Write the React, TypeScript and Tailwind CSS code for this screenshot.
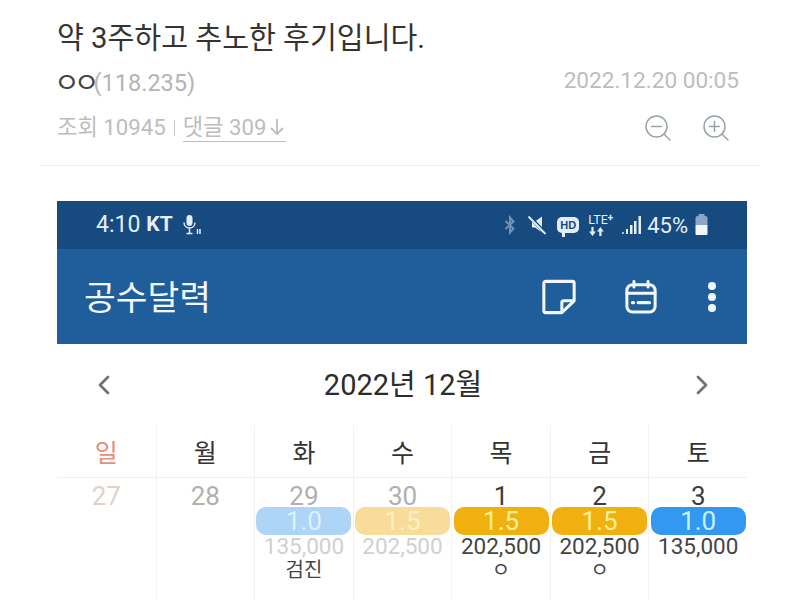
const cjk = "font-['Roboto','Noto_Sans_CJK_KR',sans-serif]";

const weekdays = ["일", "월", "화", "수", "목", "금", "토"];

const days = [
  { date: "27", dateColor: "text-[#e3d0cb]" },
  { date: "28", dateColor: "text-[#b0b0b0]" },
  {
    date: "29",
    dateColor: "text-[#b0b0b0]",
    badge: "1.0",
    badgeColor: "bg-[#aed4f8] text-[#d8f2ff]",
    amount: "135,000",
    amountColor: "text-[#cfcfcf]",
    note: "검진",
  },
  {
    date: "30",
    dateColor: "text-[#b0b0b0]",
    badge: "1.5",
    badgeColor: "bg-[#f8dd9a] text-[#fcefc0]",
    amount: "202,500",
    amountColor: "text-[#d0d0d0]",
  },
  {
    date: "1",
    dateColor: "text-[#3c3c3c]",
    badge: "1.5",
    badgeColor: "bg-[#f0b00f] text-[#fdf09a]",
    amount: "202,500",
    amountColor: "text-[#444444]",
    note: "ㅇ",
  },
  {
    date: "2",
    dateColor: "text-[#3c3c3c]",
    badge: "1.5",
    badgeColor: "bg-[#f0b00f] text-[#fdf09a]",
    amount: "202,500",
    amountColor: "text-[#444444]",
    note: "ㅇ",
  },
  {
    date: "3",
    dateColor: "text-[#3c3c3c]",
    badge: "1.0",
    badgeColor: "bg-[#3398f0] text-[#c6f2ff]",
    amount: "135,000",
    amountColor: "text-[#444444]",
  },
];

function ZoomIcon({ plus }: { plus?: boolean }) {
  return (
    <svg width="28" height="28" viewBox="0 0 28 28" fill="none" stroke="#9aa3a8" strokeWidth="1.5" strokeLinecap="round">
      <circle cx="12.5" cy="12.5" r="10.5" />
      <path d="M20 20l6 6" />
      <path d="M7.5 12.5h10" />
      {plus && <path d="M12.5 7.5v10" />}
    </svg>
  );
}

function MicIcon() {
  return (
    <svg width="20" height="22" viewBox="0 0 20 22" fill="none" stroke="#e4eef6">
      <rect x="4.5" y="1" width="6" height="11" rx="3" fill="#e4eef6" stroke="none" />
      <path d="M2 8.5c0 3.5 2.500 5.500 5.500 5.500s5.500-2 5.500-5.500M7.500 14v5M4.500 19.500h6" strokeWidth="1.4" />
      <path d="M15.500 15v5M18 15v5" strokeWidth="1.500" />
    </svg>
  );
}

function BluetoothIcon() {
  return (
    <svg width="12" height="20" viewBox="0 0 12 18" fill="none" stroke="#6f93b6" strokeWidth="2">
      <path d="M1.500 5l8 7.500-3.500 4V1.500l3.500 4-8 7.500" />
    </svg>
  );
}

function MuteIcon() {
  return (
    <svg width="20" height="20" viewBox="0 0 20 20" fill="none">
      <path d="M5 6.500h3L15 1.500v16L8 12.500H5z" fill="#e4eef6" />
      <path d="M1.500 0.500l17 18" stroke="#174a7f" strokeWidth="3.500" />
      <path d="M1.500 1.500l17 17.500" stroke="#e4eef6" strokeWidth="1.800" />
    </svg>
  );
}

function HdIcon() {
  return (
    <div className="relative flex h-[16px] w-[22px] items-center justify-center rounded-[5px] bg-[#e4eef6]">
      <span className="font-['Liberation_Sans',sans-serif] text-[11px] leading-none font-bold text-[#174a7f]">HD</span>
      <span className="absolute bottom-[-4px] left-[5px] h-[5px] w-[3px] bg-[#e4eef6]" />
    </div>
  );
}

function LteIcon() {
  return (
    <div className="relative flex h-[24px] w-[26px] flex-col items-start">
      <span className="font-['Roboto',sans-serif] text-[12.500px] leading-[13px] text-[#e4eef6]">
        LTE<span className="relative -top-[3px] text-[10px] font-bold">+</span>
      </span>
      <svg width="16" height="9" viewBox="0 0 14 8" className="ml-[1px]" fill="#e4eef6">
        <path d="M3 8L0 4h2V0h2v4h2zM10 0l3 4h-2v4H9V4H7z" />
      </svg>
    </div>
  );
}

function SignalIcon() {
  return (
    <svg width="21" height="20" viewBox="0 0 21 20" fill="#e4eef6">
      <rect x="0" y="17" width="2" height="2" opacity="0.7" />
      <rect x="4" y="14" width="2" height="5" />
      <rect x="8" y="10" width="2.500" height="9" />
      <rect x="12" y="6" width="2.500" height="13" />
      <rect x="16.500" y="1" width="2.500" height="18" />
    </svg>
  );
}

function BatteryIcon() {
  return (
    <svg width="15" height="22" viewBox="0 0 14 22">
      <rect x="4" y="0" width="6" height="2" fill="#8aa8c6" />
      <path d="M1 4a2 2 0 012-2h8a2 2 0 012 2v7H1z" fill="#8aa8c6" />
      <path d="M1 11h12v9a1 1 0 01-1 1H2a1 1 0 01-1-1z" fill="#f2f6f9" />
    </svg>
  );
}

function NoteIcon() {
  return (
    <svg width="36" height="36" viewBox="0 0 38 38" fill="none" stroke="#f2f7fb" strokeWidth="3.200" strokeLinejoin="round">
      <path d="M5 2.500h28a2 2 0 012 2V23L22 35.500H5a2 2 0 01-2-2v-29a2 2 0 012-2z" />
      <path d="M35 23H24a2 2 0 00-2 2v10.500" />
    </svg>
  );
}

function CalendarIcon() {
  return (
    <svg width="32" height="34" viewBox="0 0 34 36" fill="none" stroke="#f2f7fb" strokeWidth="3.200" strokeLinecap="round">
      <rect x="2" y="5" width="30" height="29" rx="6" />
      <path d="M9.500 1.500v6M24.500 1.500v6M2 14h30" />
      <path d="M8 24h1M14 24h12" strokeWidth="3.500" />
    </svg>
  );
}

function Chevron({ right }: { right?: boolean }) {
  return (
    <svg width="14" height="20" viewBox="0 0 14 20" fill="none" stroke="#6f7478" strokeWidth="2.800" strokeLinecap="round" strokeLinejoin="round">
      <path d={right ? "M3 2l8 8-8 8" : "M11 2l-8 8 8 8"} />
    </svg>
  );
}

export default function App() {
  return (
    <div className={`h-[600px] w-[800px] overflow-hidden bg-white ${cjk}`}>
      <div className="mx-[40px] flex h-[166px] flex-col border-b border-[#efefef] pr-[21px] pl-[17px]">
        <h1 className="mt-[16px] h-[44px] text-[29.200px] leading-[44px] font-normal text-[#333333]">
          약 3주하고 추노한 후기입니다.
        </h1>
        <div className="mt-[7px] flex h-[34px] items-center justify-between">
          <div className="flex items-center text-[23.500px] text-[#b5b5b5]">
            <span className="-ml-[3px] text-[28px] leading-none tracking-[-6px] text-[#444444]">ㅇㅇ</span>
            <span>(118.235)</span>
          </div>
          <span className="pb-[6px] text-[22.600px] text-[#bdbdbd]">2022.12.20 00:05</span>
        </div>
        <div className="mt-[10px] flex h-[34px] items-center justify-between">
          <div className="flex items-center text-[22.200px] text-[#bdbdbd]">
            <span>조회 10945</span>
            <span className="mx-[8px] h-[16px] w-px bg-[#cccccc]" />
            <span className="flex h-[29px] items-center border-b border-[#bdbdbd]">
              댓글 309
              <svg width="18" height="20" viewBox="0 0 18 20" fill="none" stroke="#bdbdbd" strokeWidth="1.800" className="ml-[2px]">
                <path d="M9 2v15M3 11l6 6 6-6" />
              </svg>
            </span>
          </div>
          <div className="flex items-center gap-[30px] pr-[9px]">
            <ZoomIcon />
            <ZoomIcon plus />
          </div>
        </div>
      </div>

      <div className="mt-[35px] ml-[57px] w-[690px]">
        <div className="flex h-[48px] items-center justify-between bg-[#174a7f] pr-[38px] pl-[39px] text-[#e4eef6]">
          <div className="flex items-center">
            <span className="text-[23px]">4:10</span>
            <span className="ml-[6px] text-[21px] font-bold">KT</span>
            <span className="ml-[9px]">
              <MicIcon />
            </span>
          </div>
          <div className="flex items-center">
            <BluetoothIcon />
            <span className="ml-[11px]">
              <MuteIcon />
            </span>
            <span className="ml-[10px]">
              <HdIcon />
            </span>
            <span className="ml-[9px]">
              <LteIcon />
            </span>
            <span className="ml-[8px]">
              <SignalIcon />
            </span>
            <span className="ml-[4px] text-[22px]">45%</span>
            <span className="ml-[6px]">
              <BatteryIcon />
            </span>
          </div>
        </div>

        <div className="flex h-[95px] items-center justify-between bg-[#1f5d9b] pr-[31px] pl-[27px]">
          <span className="pt-[5px] text-[34.500px] text-[#f2f7fb]">공수달력</span>
          <div className="flex items-center">
            <NoteIcon />
            <span className="ml-[48px]">
              <CalendarIcon />
            </span>
            <div className="ml-[51px] flex flex-col gap-[3px]">
              <span className="h-[8px] w-[8px] rounded-full bg-[#f2f7fb]" />
              <span className="h-[8px] w-[8px] rounded-full bg-[#f2f7fb]" />
              <span className="h-[8px] w-[8px] rounded-full bg-[#f2f7fb]" />
            </div>
          </div>
        </div>

        <div className="flex h-[81px] items-center justify-between pr-[38px] pl-[40px]">
          <Chevron />
          <span className="pt-[2px] text-[29px] text-[#2c2c2c]">2022년 12월</span>
          <Chevron right />
        </div>

        <div className="grid grid-cols-7 border-b border-[#f0f0f0]">
          {weekdays.map((day, i) => (
            <div
              key={day}
              className={`flex h-[52px] items-center justify-center pt-[5px] text-[25px] ${i > 0 ? "border-l border-[#f2f2f2]" : ""} ${i === 0 ? "text-[#e58f7c]" : "text-[#333333]"}`}
            >
              {day}
            </div>
          ))}
        </div>

        <div className="grid grid-cols-7">
          {days.map((day, i) => (
            <div
              key={day.date}
              className={`flex h-[123px] flex-col items-center ${i > 0 ? "border-l border-[#f2f2f2]" : ""}`}
            >
              <span className={`mt-[7px] h-[22px] text-[26px] leading-[22px] ${day.dateColor}`}>{day.date}</span>
              {day.badge && (
                <div className={`flex h-[28px] w-[95px] items-center justify-center rounded-[10px] text-[26px] leading-none ${day.badgeColor}`}>
                  {day.badge}
                </div>
              )}
              {day.amount && (
                <span className={`h-[24px] text-[22.500px] leading-[23px] ${day.amountColor}`}>{day.amount}</span>
              )}
              {day.note && <span className="h-[22px] text-[20px] leading-[22px] text-[#444444]">{day.note}</span>}
            </div>
          ))}
        </div>
      </div>
    </div>
  );
}
